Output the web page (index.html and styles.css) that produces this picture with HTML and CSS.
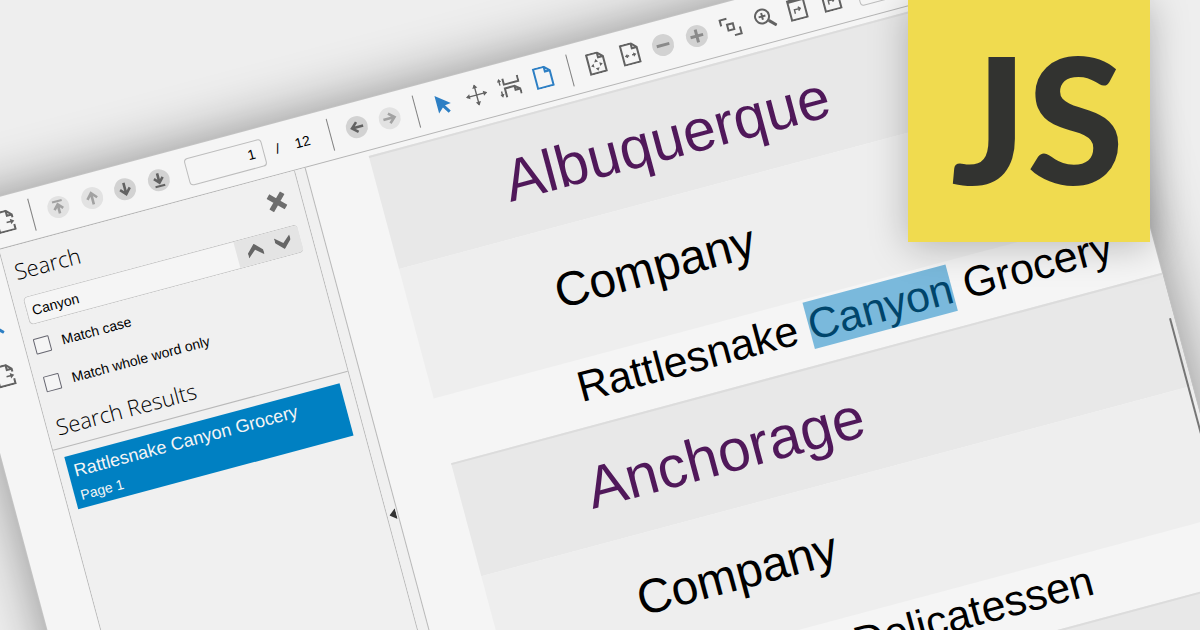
FILE: index.html
```html
<!DOCTYPE html>
<html lang="en">
<head>
<meta charset="utf-8">
<title>JavaScript document viewer search</title>
<link rel="stylesheet" href="styles.css">
</head>
<body>
<svg class="defs" aria-hidden="true">
  <symbol id="export" viewBox="0 0 22 22"><path d="M3 5V1h11l5 5v3M14 1v5h5M3 9v12h16v-5"/><path class="thin" d="M12 12.500h6"/><path class="fill" d="M20 12.500l-4-2.800v5.600z"/></symbol>
  <symbol id="first" viewBox="0 0 22 22"><path class="bold" d="M11 17.500V8.500M6.500 13L11 8.200l4.500 4.800"/><path d="M6 5h10"/></symbol>
  <symbol id="up" viewBox="0 0 22 22"><path class="bold" d="M11 17.500V6M6 11.500l5-5.500 5 5.500"/></symbol>
  <symbol id="down" viewBox="0 0 22 22"><path class="bold" d="M11 4.500V16M6 10.500l5 5.500 5-5.500"/></symbol>
  <symbol id="last" viewBox="0 0 22 22"><path class="bold" d="M11 4v9M6.500 8.800l4.500 4.800 4.500-4.800"/><path d="M6 17h10"/></symbol>
  <symbol id="back" viewBox="0 0 22 22"><path class="bold" d="M17.500 11H6M11.500 6L6 11l5.500 5"/></symbol>
  <symbol id="next" viewBox="0 0 22 22"><path class="bold" d="M4.500 11H16M10.500 6l5.500 5-5.500 5"/></symbol>
  <symbol id="minus" viewBox="0 0 22 22"><path class="heavy" d="M4.500 11h13"/></symbol>
  <symbol id="plus" viewBox="0 0 22 22"><path class="heavy" d="M4.500 11h13M11 4.500v13"/></symbol>
  <symbol id="cursor" viewBox="0 0 22 22"><path class="fill" d="M5 1l14 11-6.200.7 4.200 6.600-2.600 1.700-4.200-6.600-5.200 4.800z"/></symbol>
  <symbol id="move" viewBox="0 0 22 22"><path class="thin" d="M1 11h20M11 1v20"/><path class="fill" d="M0 11l4-2.600v5.200zM22 11l-4-2.600v5.200zM11 0L8.400 4h5.200zM11 22l-2.600-4h5.200z"/></symbol>
  <symbol id="continuous" viewBox="0 0 22 22"><path d="M6 2v6h15V2M6 21v-9h10l5 4v5M16 12v4h5"/><path class="thin" d="M2 3v5M2 14v5"/><path class="fill" d="M2 1L-.2 4.500h4.400zM2 20.500L-.2 17h4.400z"/></symbol>
  <symbol id="page" viewBox="0 0 22 22"><path d="M3 1h11l5 5v15H3zM14 1v5h5"/></symbol>
  <symbol id="fitpage" viewBox="0 0 22 22"><path d="M3 1h11l5 5v15H3zM14 1v5h5"/><path class="fill" d="M5 13l3-2v4zM17 13l-3-2v4zM11 7l-2 3h4zM11 19l-2-3h4z"/></symbol>
  <symbol id="fitwidth" viewBox="0 0 22 22"><path d="M3 1h11l5 5v15H3zM14 1v5h5"/><path class="fill" d="M5 12.500l3-2.200v4.400zM17 12.500l-3-2.200v4.400z"/><path class="thin" d="M7 12.500h2.500M12.500 12.500H15"/></symbol>
  <symbol id="marquee" viewBox="0 0 22 22"><path d="M2 8V2h7M13 20h7v-7M8 8h6v6H8z"/></symbol>
  <symbol id="zoom" viewBox="0 0 22 22"><circle cx="9" cy="9" r="7"/><path d="M9 5.500v7M5.500 9h7"/><path class="heavy" d="M14.500 14.500L21 21"/></symbol>
  <symbol id="rotate" viewBox="0 0 22 22"><path d="M3 1h16v20H3z"/><path class="heavy" d="M3 2h16"/><path class="thin" d="M8 15v-4h6M12 9l2 2-2 2"/></symbol>
</svg>

<main class="window">
  <nav class="toolbar" aria-label="Viewer">
    <button class="tool" aria-label="Export"><svg><use href="#export"/></svg></button>
    <i class="sep"></i>
    <div class="group pager">
      <button class="tool round off" aria-label="First page"><svg><use href="#first"/></svg></button>
      <button class="tool round off" aria-label="Previous page"><svg><use href="#up"/></svg></button>
      <button class="tool round" aria-label="Next page"><svg><use href="#down"/></svg></button>
      <button class="tool round" aria-label="Last page"><svg><use href="#last"/></svg></button>
    </div>
    <div class="pages"><input class="page-input" aria-label="Page number" value="1"><span>/</span><span>12</span></div>
    <i class="sep"></i>
    <div class="group history">
      <button class="tool round" aria-label="Back"><svg><use href="#back"/></svg></button>
      <button class="tool round off" aria-label="Forward"><svg><use href="#next"/></svg></button>
    </div>
    <i class="sep"></i>
    <div class="group pager">
      <button class="tool active" aria-label="Select"><svg><use href="#cursor"/></svg></button>
      <button class="tool" aria-label="Pan"><svg><use href="#move"/></svg></button>
      <button class="tool" aria-label="Continuous view"><svg><use href="#continuous"/></svg></button>
      <button class="tool active" aria-label="Single page"><svg><use href="#page"/></svg></button>
    </div>
    <i class="sep"></i>
    <div class="group zooming">
      <button class="tool" aria-label="Fit page"><svg><use href="#fitpage"/></svg></button>
      <button class="tool" aria-label="Fit width"><svg><use href="#fitwidth"/></svg></button>
      <button class="tool round mid" aria-label="Zoom out"><svg><use href="#minus"/></svg></button>
      <button class="tool round mid" aria-label="Zoom in"><svg><use href="#plus"/></svg></button>
      <button class="tool" aria-label="Zoom to area"><svg><use href="#marquee"/></svg></button>
      <button class="tool" aria-label="Zoom"><svg><use href="#zoom"/></svg></button>
      <button class="tool" aria-label="Rotate page"><svg><use href="#rotate"/></svg></button>
      <button class="tool" aria-label="Rotate document"><svg><use href="#rotate"/></svg></button>
    </div>
    <input class="page-input zoom-input" aria-label="Zoom level">
  </nav>

  <div class="body">
    <aside class="rail">
      <button class="tool active" aria-label="Search"><svg><use href="#zoom"/></svg></button>
      <button class="tool" aria-label="Export"><svg><use href="#export"/></svg></button>
    </aside>

    <section class="panel">
      <header class="panel-head">
        <h2 class="title">Search</h2>
        <button class="close" aria-label="Close"><svg viewBox="0 0 18 18"><path d="M2 2l14 14M16 2L2 16"/></svg></button>
      </header>
      <div class="field">
        <input class="query" aria-label="Search text" value="Canyon">
        <div class="steps">
          <button class="step" aria-label="Previous match"><svg viewBox="0 0 16 13"><path d="M0 8L8 0l8 8v5L8 6l-8 7z"/></svg></button>
          <button class="step" aria-label="Next match"><svg viewBox="0 0 16 13"><path d="M0 5l8 8 8-8V0L8 7 0 0z"/></svg></button>
        </div>
      </div>
      <div class="options">
        <label class="option"><input type="checkbox">Match case</label>
        <label class="option"><input type="checkbox">Match whole word only</label>
      </div>
      <h2 class="title results-title">Search Results</h2>
      <a class="result" href="#match"><span class="result-text">Rattlesnake Canyon Grocery</span><span class="result-page">Page 1</span></a>
    </section>

    <button class="splitter" aria-label="Collapse panel"><svg viewBox="0 0 7 11"><path d="M0 5.500L7 0v11z"/></svg></button>

    <article class="document">
      <h3 class="city">Albuquerque</h3>
      <p class="column">Company</p>
      <p class="value" id="match">Rattlesnake <mark>Canyon</mark> Grocery</p>
      <h3 class="city">Anchorage</h3>
      <p class="column">Company</p>
      <p class="value second-word">Delicatessen</p>
      <div class="city"></div>
      <i class="thumb"></i>
    </article>
  </div>
</main>

<div class="logo" role="img" aria-label="JavaScript"><span>J</span><span>S</span></div>
</body>
</html>
```
FILE: styles.css
```css
* { box-sizing: border-box; }

body {
  margin: 0;
  height: 100vh;
  overflow: hidden;
  position: relative;
  background: #eeeeee;
  color: #000;
  font: 14px "Liberation Sans", Arial, sans-serif;
  font-kerning: none;
}

.defs { position: absolute; width: 0; height: 0; }

button { padding: 0; border: 0; background: none; color: inherit; font: inherit; }
h2, h3, p { margin: 0; font-weight: 400; }

/* Tilted application window */
.window {
  position: absolute;
  left: -64px;
  top: 214px;
  width: calc(100vw - 31px);
  transform: rotate(-15deg);
  transform-origin: 0 0;
  background: #f5f5f5;
  box-shadow: 0 0 0 1px #c4c4c4, 0 0 56px rgba(0, 0, 0, .42);
}

/* Toolbar */
.toolbar {
  display: flex;
  align-items: center;
  gap: 16px;
  height: 51px;
  padding-left: 54px;
  border-bottom: 1px solid #b4b4b4;
  overflow: hidden;
}

.group { display: flex; flex: none; justify-content: space-between; }
.pager { width: 126px; }
.history { width: 56px; }
.zooming { width: 265px; }
.sep { flex: none; width: 1px; height: 33px; background: #808080; }

.tool { display: block; flex: none; width: 22px; height: 22px; color: #626262; }
.tool svg {
  display: block;
  width: 22px;
  height: 22px;
  fill: none;
  stroke: currentColor;
  stroke-width: 2;
}
.thin { stroke-width: 1.4; }
.bold { stroke-width: 2.6; }
.heavy { stroke-width: 3; }
.fill { fill: currentColor; stroke: none; }
.round { border-radius: 50%; background: #d2d2d2; }
.off { background: #e2e2e2; color: #a2a2a2; }
.mid { color: #8a8a8a; }
.active { color: #2d7fc4; }

.pages { display: flex; flex: none; align-items: center; gap: 12px; margin-left: 2px; width: 132px; }
.page-input {
  width: 80px;
  height: 28px;
  padding: 0 8px 3px 10px;
  border: 1px solid #bdbdbd;
  border-radius: 4px;
  background: #f5f5f5;
  font: inherit;
  text-align: right;
}
.pages span:last-child { margin-left: 4px; }
.zoom-input { flex: none; }

/* Body */
.body { display: flex; min-height: 760px; }

.rail {
  flex: none;
  display: flex;
  flex-direction: column;
  gap: 30px;
  width: 52px;
  padding: 60px 0 0 14px;
  border-right: 1px solid #b9b9b9;
}

.panel { flex: none; width: 306px; background: #f0f0f0; border-right: 1px solid #b9b9b9; }
.panel-head { display: flex; justify-content: space-between; padding: 0 15px 2px 0; }
.title {
  padding-left: 9px;
  font: 300 22px/50px "Open Sans", sans-serif;
}
.close { width: 19px; }
.close svg { display: block; width: 19px; height: 19px; fill: none; stroke: #6e6e6e; stroke-width: 5; }

.field {
  display: flex;
  height: 29px;
  margin: 0 11px 0 10px;
  border: 1px solid #c6c6c6;
  border-right: 0;
  border-radius: 5px;
  overflow: hidden;
  background: #f5f5f5;
}
.query { flex: 1; min-width: 0; padding: 0 5px; border: 0; background: none; font: inherit; }
.steps { display: flex; align-items: center; justify-content: center; gap: 13px; width: 66px; background: #e4e4e4; }
.step svg { display: block; width: 16px; height: 13px; fill: #666; }

.options { padding: 2px 0 0 9px; }
.option { display: flex; align-items: center; gap: 12px; height: 39px; }
.option input {
  appearance: none;
  width: 16px;
  height: 16px;
  margin: 0;
  border: 1px solid #666670;
  border-radius: 1px;
  background: #f5f5f5;
}

.results-title { padding-top: 4px; line-height: 42px; border-bottom: 1px solid #b9b9b9; }
.result {
  display: block;
  margin: 9px 11px 0 9px;
  padding: 2px 6px 3px;
  background: #0080c2;
  color: #f5f5f5;
  text-decoration: none;
}
.result span { display: block; }
.result-text { font-size: 18px; line-height: 29px; white-space: nowrap; }
.result-page { line-height: 20px; }

.splitter {
  flex: none;
  display: flex;
  justify-content: center;
  align-items: flex-start;
  width: 11px;
  padding-top: 352px;
  border-right: 1px solid #b9b9b9;
  background: #f0f0f0;
}
.splitter svg { width: 7px; height: 11px; fill: #333; }

/* Report page */
.document { position: relative; flex: 1; padding: 5px 0 0 64px; overflow: hidden; white-space: nowrap; }
.city {
  height: 117px;
  padding-left: 125px;
  border-top: 2px solid #dcdcdc;
  background: #e8e8e8;
  color: #50185a;
  font-size: 59px;
  line-height: 119px;
}
.column { padding: 0 0 6px 145px; background: #eeeeee; font-size: 48px; line-height: 128px; }
.value { padding: 0 0 13px 142px; font-size: 43px; line-height: 54px; }
.second-word { padding-left: 343px; }
mark { background: #7ab9dc; color: #00456b; }
.thumb { position: absolute; right: 3px; top: 369px; width: 2px; height: 200px; background: #757575; }

/* Logo badge */
.logo {
  position: absolute;
  right: 50px;
  top: 0;
  display: flex;
  justify-content: flex-end;
  width: 242px;
  height: 242px;
  padding-right: 26px;
  background: #f0db4f;
  color: #323330;
  box-shadow: 0 4px 36px rgba(0, 0, 0, .25);
  font: 900 176px/234px Lato, sans-serif;
}
```
